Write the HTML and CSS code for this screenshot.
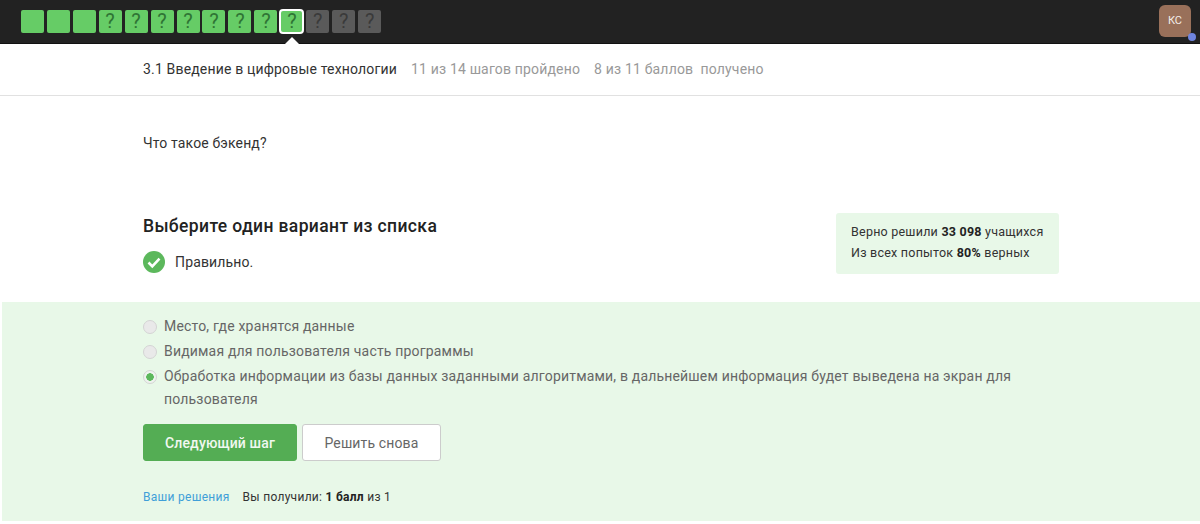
FILE: index.html
```
<!DOCTYPE html>
<html lang="ru">
<head>
<meta charset="utf-8">
<title>Шаг</title>
<link rel="stylesheet" href="styles.css">
</head>
<body>
<header class="topbar">
  <div class="steps">
    <span class="step done"></span><span class="step done"></span><span class="step done"></span>
    <span class="step done">?</span><span class="step done">?</span><span class="step done">?</span><span class="step done">?</span><span class="step done">?</span><span class="step done">?</span><span class="step done">?</span>
    <span class="step done current">?</span>
    <span class="step">?</span><span class="step">?</span><span class="step">?</span>
  </div>
  <div class="avatar">КС<span class="dot"></span></div>
</header>
<div class="lesson">
  <span class="lesson-title">3.1 Введение в цифровые технологии</span>
  <span class="lesson-meta">11 из 14 шагов пройдено</span>
  <span class="lesson-meta">8 из 11 баллов&nbsp; получено</span>
</div>
<p class="question">Что такое бэкенд?</p>
<div class="quiz-head">
  <div>
    <h2 class="quiz-title">Выберите один вариант из списка</h2>
    <div class="verdict">
      <svg class="check" width="22" height="22" viewBox="0 0 22 22"><circle cx="11" cy="11" r="11" fill="#5cb85c"/><path d="M5.5 11.5l3.8 3.8 7.2-7.6" fill="none" stroke="#fff" stroke-width="2.6"/></svg>
      <span>Правильно.</span>
    </div>
  </div>
  <div class="stats">
    <div>Верно решили <b>33 098</b> учащихся</div>
    <div>Из всех попыток <b>80%</b> верных</div>
  </div>
</div>
<section class="answer">
  <div class="option"><span class="radio"></span><span>Место, где хранятся данные</span></div>
  <div class="option"><span class="radio"></span><span>Видимая для пользователя часть программы</span></div>
  <div class="option"><span class="radio checked"></span><span>Обработка информации из базы данных заданными алгоритмами, в дальнейшем информация будет выведена на экран для пользователя</span></div>
  <div class="actions">
    <button class="btn primary">Следующий шаг</button>
    <button class="btn secondary">Решить снова</button>
  </div>
  <div class="result"><a class="link" href="#">Ваши решения</a><span>Вы получили: <b>1 балл</b> из 1</span></div>
</section>
</body>
</html>
```
FILE: styles.css
```
* { box-sizing: border-box; }
html, body { margin: 0; padding: 0; }
body { width: 1200px; height: 524px; overflow: hidden; background: #fff; font-family: Roboto, "Liberation Sans", sans-serif; font-size: 14px; color: #222; }
.topbar { height: 44px; background: #222; border-bottom: 1px solid #111; display: flex; justify-content: space-between; padding: 10px 9px 0 20.7px; }
.steps { display: flex; gap: 2.97px; height: 23px; }
.step { position: relative; width: 23px; height: 23px; border-radius: 2px; background: #5a5a5a; color: #3a3a3a; font-size: 20px; font-weight: 400; line-height: 23px; text-align: center; }
.step.done { background: #66cc66; color: #2f7535; }
.step.current { outline: 2px solid #fff; outline-offset: -1px; border-radius: 3px; }
.step.current::after { content: ""; position: absolute; left: 5px; top: 27px; border: 7px solid transparent; border-top: 0; border-bottom: 7px solid #fff; }
.avatar { position: relative; width: 32px; height: 32px; margin-top: -5px; border-radius: 6px; background: #99705a; color: #f3ece8; font-size: 11px; line-height: 32px; text-align: center; }
.dot { position: absolute; right: -5px; bottom: -4px; width: 8px; height: 8px; border-radius: 50%; background: #6f84de; }
.lesson { height: 52px; padding: 0 143px 1px; border-bottom: 1px solid #e1e1e1; display: flex; align-items: center; gap: 14px; font-size: 14px; letter-spacing: .17px; }
.lesson-title { color: #333; }
.lesson-meta { color: #999; }
.question { margin: 0; padding: 37px 143px 0; height: 118px; line-height: 20px; font-size: 14px; letter-spacing: .14px; color: #333; }
.quiz-head { display: flex; justify-content: space-between; padding: 0 141px 0 143px; height: 88px; }
.quiz-title { margin: 0; font-size: 17.5px; font-weight: 500; line-height: 24px; letter-spacing: .37px; color: #222; }
.verdict { display: flex; align-items: center; gap: 10px; margin-top: 13px; font-size: 14px; letter-spacing: .14px; color: #333; }
.stats { width: 223px; height: 61px; margin-top: -1px; background: #e8f8e8; border-radius: 3px; padding: 8px 15px; font-size: 12.5px; line-height: 21px; color: #333; letter-spacing: .23px; }
.stats b { color: #222; }
.answer { margin-left: 2px; height: 219px; background: #e8f8e8; padding: 13px 141px 0; color: #666; font-size: 14px; line-height: 23px; letter-spacing: .18px; }
.option { display: flex; gap: 7px; margin-bottom: 2px; }
.radio { flex: none; width: 14px; height: 14px; margin-top: 5px; border-radius: 50%; background: #e9e9e9; border: 1px solid #d4d4d4; }
.radio.checked { background: radial-gradient(circle, #5cb85c 0 3.5px, #eef3ee 4px); }
.actions { display: flex; gap: 5px; margin-top: 13px; }
.btn { width: 154px; height: 37px; border-radius: 3px; font-family: inherit; font-size: 14px; letter-spacing: .14px; padding: 0; }
.primary { background: #54ad54; border: 1px solid #54ad54; color: #f0f8f0; font-weight: 500; }
.secondary { width: 139px; background: #fff; border: 1px solid #ccc; color: #666; }
.result { display: flex; gap: 13px; margin-top: 26px; font-size: 12px; line-height: 20px; color: #333; letter-spacing: .28px; }
.result b { color: #222; }
.link { color: #3f9fd8; text-decoration: none; }
```
